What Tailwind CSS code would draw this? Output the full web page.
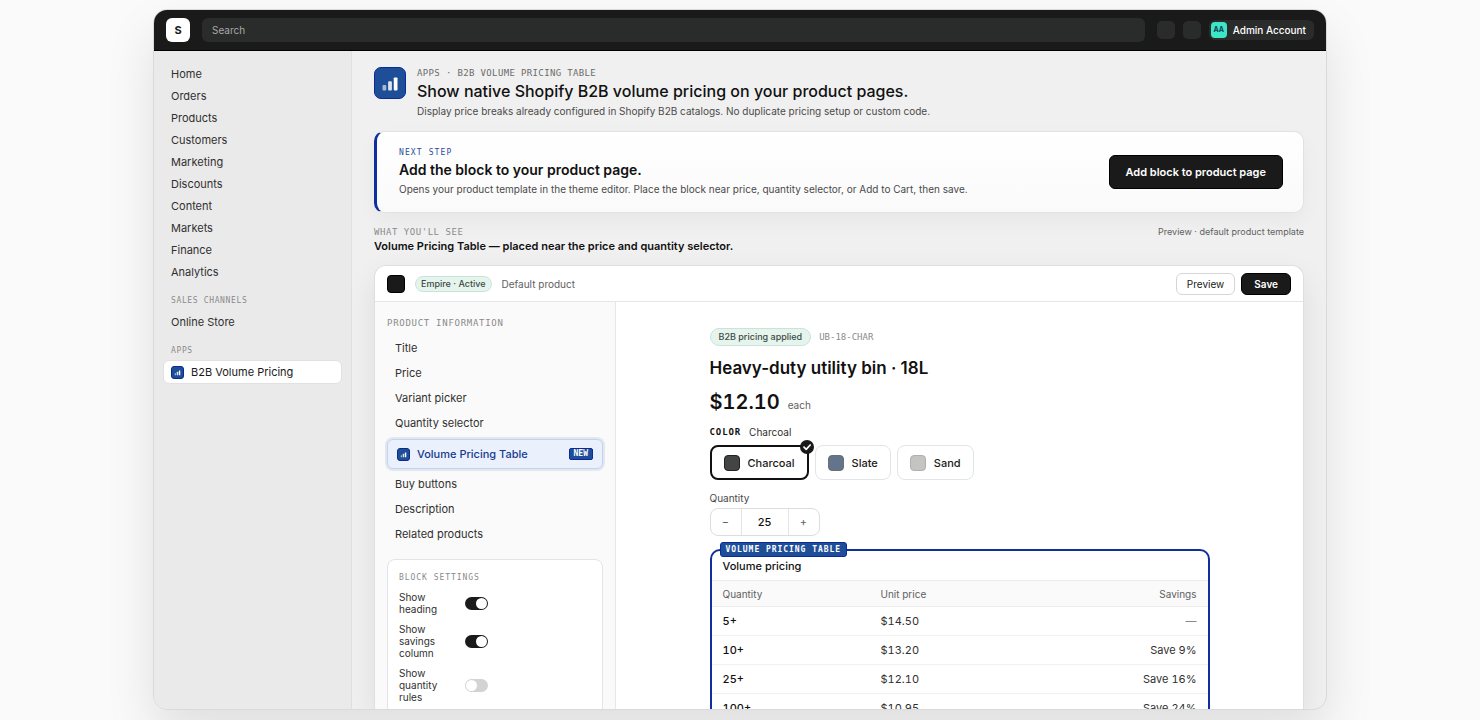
<!DOCTYPE html>
<html lang="en">
<head>
  <meta charset="UTF-8" />
  <meta name="viewport" content="width=device-width, initial-scale=1.0"/>
  <title>B2B Volume Pricing Table</title>
  <script src="https://cdn.jsdelivr.net/npm/@tailwindcss/browser@4"></script>
</head>
<body class="bg-[#fafafa] font-['Inter',sans-serif] text-[11px] leading-4 text-[#303030]">

  <svg class="hidden">
    <symbol id="bars" viewBox="0 0 32 32">
      <rect x="8" y="18" width="4" height="6" rx="1" fill="#fff" fill-opacity=".6"/>
      <rect x="14" y="14" width="4" height="10" rx="1" fill="#fff" fill-opacity=".85"/>
      <rect x="20" y="10" width="4" height="14" rx="1" fill="#fff"/>
    </symbol>
  </svg>

  <div class="h-screen overflow-hidden pt-[9px] pb-[10px]">
    <div class="mx-auto flex h-full w-full max-w-[1174px] flex-col overflow-hidden rounded-[14px] border border-[#d9dada] bg-[#f0f0f0] shadow-[0_24px_50px_rgba(0,0,0,0.11)]">

      <!-- Top bar -->
      <header class="flex h-[41px] shrink-0 items-center gap-3 border-b border-black bg-[#1a1a1a] px-3">
        <span class="flex size-6 items-center justify-center rounded-md bg-white text-[11px] font-bold text-[#1a1a1a]">S</span>
        <input type="search" aria-label="Search" placeholder="Search" class="h-6 min-w-0 flex-1 rounded-md bg-[#2a2b2b] px-[10px] text-[10px] text-white placeholder:text-[#a8a8a8]" />
        <div class="flex items-center gap-2">
          <button aria-label="Help" class="size-[18px] rounded-[5px] bg-[#2a2b2b]"></button>
          <button aria-label="Notifications" class="size-[18px] rounded-[5px] bg-[#2a2b2b]"></button>
          <button class="flex h-5 items-center gap-[6px] rounded-md bg-[#2a2b2b] pr-2 pl-[2px] text-[10px] font-medium text-white">
            <span class="flex size-4 items-center justify-center rounded-sm bg-[#3ee6c8] text-[7px] font-bold text-[#0b3b52]">AA</span>
            Admin Account
          </button>
        </div>
      </header>

      <div class="flex min-h-0 flex-1">

        <!-- Sidebar -->
        <nav class="w-[198px] shrink-0 border-r border-[#dfe0e0] bg-[#eaeaea] px-[9px] pt-3">
          <ul class="leading-[22px] [&_a]:block [&_a]:px-2">
            <li><a href="#">Home</a></li>
            <li><a href="#">Orders</a></li>
            <li><a href="#">Products</a></li>
            <li><a href="#">Customers</a></li>
            <li><a href="#">Marketing</a></li>
            <li><a href="#">Discounts</a></li>
            <li><a href="#">Content</a></li>
            <li><a href="#">Markets</a></li>
            <li><a href="#">Finance</a></li>
            <li><a href="#">Analytics</a></li>
          </ul>
          <h2 class="mt-[10px] px-2 font-['DejaVu_Sans_Mono',monospace] text-[8px] tracking-[0.08em] text-[#8a8a8a]">SALES CHANNELS</h2>
          <a href="#" class="mt-[2px] block px-2 leading-[22px]">Online Store</a>
          <h2 class="mt-[10px] px-2 font-['DejaVu_Sans_Mono',monospace] text-[8px] tracking-[0.08em] text-[#8a8a8a]">APPS</h2>
          <a href="#" class="mt-px flex h-6 items-center gap-[7px] rounded-md border border-[#e0e1e1] bg-white px-[7px] text-[#1a1a1a]">
            <svg class="size-[13px] rounded-[3px] border border-[#0a2a8c] bg-[#1f4e99]"><use href="#bars"/></svg>
            B2B Volume Pricing
          </a>
        </nav>

        <!-- Main -->
        <main class="flex min-w-0 flex-1 flex-col px-[22px] pt-4">
          <div class="flex gap-[11px]">
            <svg class="size-8 shrink-0 rounded-[7px] border border-[#0a2a9c] bg-[#1f4e99]"><use href="#bars"/></svg>
            <div>
              <p class="font-['DejaVu_Sans_Mono',monospace] text-[9px] leading-3 tracking-[0.04em] text-[#6b6b6b]">APPS · B2B VOLUME PRICING TABLE</p>
              <h1 class="text-base leading-6 font-medium text-[#111]">Show native Shopify B2B volume pricing on your product pages.</h1>
              <p class="text-[10px] text-[#4a4a4a]">Display price breaks already configured in Shopify B2B catalogs. No duplicate pricing setup or custom code.</p>
            </div>
          </div>

          <section class="mt-3 flex items-center justify-between rounded-[10px] border border-l-3 border-[#e1e2e3] border-l-[#0f2f9c] bg-linear-to-b from-white to-[#fafafa] py-[15px] pr-5 pl-[22px] shadow-[0_8px_20px_rgba(0,0,0,0.04)]">
            <div>
              <p class="font-['DejaVu_Sans_Mono',monospace] text-[8px] leading-3 tracking-[0.14em] text-[#2a4b9b]">NEXT STEP</p>
              <h2 class="text-sm leading-[22px] font-semibold text-[#111]">Add the block to your product page.</h2>
              <p class="text-[10px] text-[#4a4a4a]">Opens your product template in the theme editor. Place the block near price, quantity selector, or Add to Cart, then save.</p>
            </div>
            <button class="h-[34px] rounded-md border border-black bg-[#1a1a1a] px-4 text-[11px] font-semibold text-white">Add block to product page</button>
          </section>

          <div class="mt-[11px] flex justify-between">
            <div>
              <p class="font-['DejaVu_Sans_Mono',monospace] text-[9px] tracking-[0.06em] text-[#8a8a8a]">WHAT YOU'LL SEE</p>
              <h2 class="leading-3 font-semibold text-[#111]">Volume Pricing Table — placed near the price and quantity selector.</h2>
            </div>
            <p class="text-[9px] text-[#616161]">Preview · default product template</p>
          </div>

          <!-- Theme editor preview -->
          <section class="mt-[13px] flex min-h-0 flex-1 flex-col overflow-hidden rounded-t-xl border border-b-0 border-[#dedfe0] bg-white shadow-[0_12px_30px_rgba(0,0,0,0.08)]">
            <div class="flex h-9 shrink-0 items-center border-b border-[#e4e5e6] px-3">
              <span class="size-[18px] rounded-sm border border-black bg-[#1a1a1a]"></span>
              <span class="ml-[10px] rounded-full border border-[#c9e3d8] bg-[#e6f4ee] px-[5px] text-[9px] leading-[14px] font-medium text-[#3c4a45]">Empire · Active</span>
              <span class="ml-[10px] text-[10px] text-[#616161]">Default product</span>
              <button class="ml-auto h-[22px] rounded-md border border-[#d4d5d6] bg-white px-[10px] text-[10px] text-[#1a1a1a]">Preview</button>
              <button class="ml-[6px] h-[22px] rounded-md border border-black bg-[#1a1a1a] px-3 text-[10px] font-semibold text-white">Save</button>
            </div>

            <div class="flex min-h-0 flex-1">
              <aside class="w-[241px] shrink-0 border-r border-[#e6e7e8] bg-[#fafafa] px-3 pt-[13px]">
                <h3 class="font-['DejaVu_Sans_Mono',monospace] text-[9px] tracking-[0.08em] text-[#8a8a8a]">PRODUCT INFORMATION</h3>
                <ul class="mt-[5px] leading-[25px] [&_a]:block [&_a]:px-2">
                  <li><a href="#">Title</a></li>
                  <li><a href="#">Price</a></li>
                  <li><a href="#">Variant picker</a></li>
                  <li><a href="#">Quantity selector</a></li>
                </ul>
                <a href="#" class="my-[3px] flex h-[30px] items-center rounded-md border border-[#c3d3ee] bg-[#eaf1fd] px-[9px] font-medium text-[#173a8f] ring-2 ring-[#1f4e99]/10">
                  <svg class="mr-[7px] size-[13px] rounded-[3px] border border-[#0a2a8c] bg-[#1f4e99]"><use href="#bars"/></svg>
                  Volume Pricing Table
                  <span class="ml-auto rounded-[2px] border border-[#0a2a9c] bg-[#1f4e99] px-1 font-['DejaVu_Sans_Mono',monospace] text-[8px] leading-[10px] font-bold text-white">NEW</span>
                </a>
                <ul class="leading-[25px] [&_a]:block [&_a]:px-2">
                  <li><a href="#">Buy buttons</a></li>
                  <li><a href="#">Description</a></li>
                  <li><a href="#">Related products</a></li>
                </ul>

                <div class="mt-3 h-60 rounded-lg border border-[#e3e4e5] bg-white px-[11px] pt-[10px]">
                  <h3 class="font-['DejaVu_Sans_Mono',monospace] text-[8px] tracking-[0.12em] text-[#8a8a8a]">BLOCK SETTINGS</h3>
                  <div class="mt-[5px] flex flex-col gap-2 text-[10px] leading-3">
                    <label class="flex items-center"><span class="w-[66px] pr-5">Show heading</span>
                      <input type="checkbox" checked class="flex h-[13px] w-[23px] appearance-none items-center rounded-full bg-[#d2d3d3] px-px before:size-[11px] before:rounded-full before:bg-white checked:justify-end checked:bg-[#1a1a1a]" /></label>
                    <label class="flex items-center"><span class="w-[66px] pr-5">Show savings column</span>
                      <input type="checkbox" checked class="flex h-[13px] w-[23px] appearance-none items-center rounded-full bg-[#d2d3d3] px-px before:size-[11px] before:rounded-full before:bg-white checked:justify-end checked:bg-[#1a1a1a]" /></label>
                    <label class="flex items-center"><span class="w-[66px] pr-5">Show quantity rules</span>
                      <input type="checkbox" class="flex h-[13px] w-[23px] appearance-none items-center rounded-full bg-[#d2d3d3] px-px before:size-[11px] before:rounded-full before:bg-white checked:justify-end checked:bg-[#1a1a1a]" /></label>
                  </div>
                </div>
              </aside>

              <!-- Product page -->
              <div class="min-w-0 flex-1 pt-[26px]">
                <div class="mx-auto w-full max-w-[500px]">
                  <div class="flex items-center gap-2">
                    <span class="rounded-full border border-[#c9e3d8] bg-[#e6f4ee] px-2 text-[9px] font-medium text-[#3c4a45]">B2B pricing applied</span>
                    <span class="font-['DejaVu_Sans_Mono',monospace] text-[9px] text-[#8a8a8a]">UB-18-CHAR</span>
                  </div>
                  <h2 class="mt-[10px] text-[17px] leading-6 font-semibold text-[#111]">Heavy-duty utility bin · 18L</h2>
                  <p class="mt-2 flex items-baseline gap-2 leading-7"><span class="text-xl leading-7 font-semibold text-[#111] tabular-nums">$12.10</span><span class="text-[10px] text-[#616161]">each</span></p>

                  <fieldset class="mt-[5px]">
                    <legend class="flex items-center gap-2"><span class="font-['DejaVu_Sans_Mono',monospace] text-[9px] font-bold tracking-[0.1em] text-[#111]">COLOR</span><span class="text-[10px]">Charcoal</span></legend>
                    <div class="mt-[5px] flex gap-[6px] text-[11px] font-medium text-[#1a1a1a]">
                      <label class="relative flex h-[35px] items-center gap-2 rounded-lg border-2 border-[#111] px-3">
                        <input type="radio" name="color" checked class="sr-only" />
                        <span class="size-4 rounded-sm border border-[#222] bg-[#434444]"></span>Charcoal
                        <svg class="absolute -top-[7px] -right-[7px] size-[14px]" viewBox="0 0 14 14" fill="none"><circle cx="7" cy="7" r="7" fill="#1a1a1a"/><path d="M4 7.2 6.2 9.3 10.2 5" stroke="#fff" stroke-width="1.7" stroke-linecap="round" stroke-linejoin="round"/></svg>
                      </label>
                      <label class="flex h-[35px] items-center gap-2 rounded-lg border border-[#e3e4e5] px-3">
                        <input type="radio" name="color" class="sr-only" />
                        <span class="size-4 rounded-sm border border-[#6b6f72] bg-[#64748b]"></span>Slate
                      </label>
                      <label class="flex h-[35px] items-center gap-2 rounded-lg border border-[#e3e4e5] px-3">
                        <input type="radio" name="color" class="sr-only" />
                        <span class="size-4 rounded-sm border border-[#aeb0b0] bg-[#c4c4c2]"></span>Sand
                      </label>
                    </div>
                  </fieldset>

                  <label for="qty" class="mt-[10px] block text-[10px] text-[#4a4a4a]">Quantity</label>
                  <div class="mt-[2px] flex h-7 w-[110px] overflow-hidden rounded-lg border border-[#dcddde]">
                    <button aria-label="Decrease" class="w-[30px] text-[#616161]">−</button>
                    <input id="qty" type="text" value="25" class="min-w-0 flex-1 border-x border-[#e3e4e5] text-center text-[11px] font-medium text-[#111]" />
                    <button aria-label="Increase" class="w-[30px] text-[#616161]">+</button>
                  </div>

                  <div class="relative mt-[13px] rounded-[10px] border-2 border-[#0f2f9c] text-[11px]">
                    <span class="absolute -top-[9px] left-2 rounded-[3px] border border-[#0a2a9c] bg-[#1f4e99] px-[5px] font-['DejaVu_Sans_Mono',monospace] text-[8px] leading-[13px] font-bold tracking-[0.12em] text-white">VOLUME PRICING TABLE</span>
                    <h3 class="px-[11px] pt-[7px] pb-[6px] font-medium text-[#111]">Volume pricing</h3>
                    <table class="w-full table-fixed tabular-nums [&_td]:h-[29px] [&_td]:px-[11px] [&_th]:px-[11px]">
                      <thead>
                        <tr class="h-[26px] border-y border-[#ececec] bg-[#fafafa] text-left text-[10px] text-[#616161]">
                          <th class="w-[158px] font-normal">Quantity</th><th class="font-normal">Unit price</th><th class="text-right font-normal">Savings</th>
                        </tr>
                      </thead>
                      <tbody class="divide-y divide-[#f1f1f1]">
                        <tr><td class="font-medium text-[#111]">5+</td><td>$14.50</td><td class="text-right text-[#8a8a8a]">—</td></tr>
                        <tr><td class="font-medium text-[#111]">10+</td><td>$13.20</td><td class="text-right">Save 9%</td></tr>
                        <tr><td class="font-medium text-[#111]">25+</td><td>$12.10</td><td class="text-right">Save 16%</td></tr>
                        <tr><td class="font-medium text-[#111]">100+</td><td>$10.95</td><td class="text-right">Save 24%</td></tr>
                      </tbody>
                    </table>
                  </div>
                </div>
              </div>
            </div>
          </section>
        </main>
      </div>
    </div>
  </div>

</body>
</html>
